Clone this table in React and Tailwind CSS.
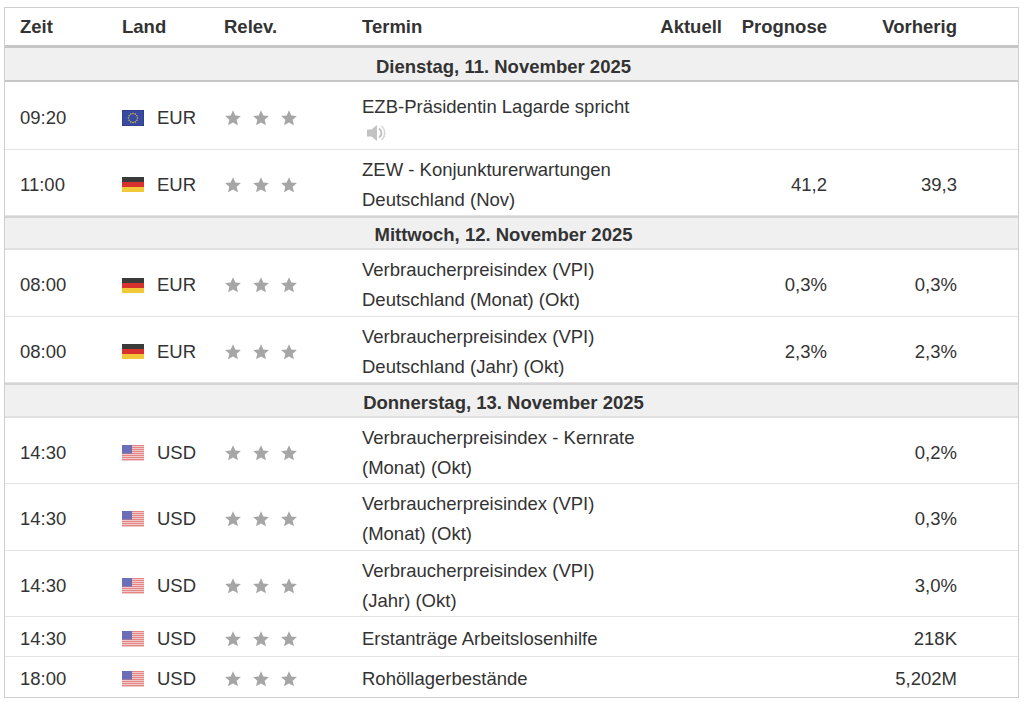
import React from 'react'

const days = [
  {
    label: 'Dienstag, 11. November 2025',
    h: 'h-[34px] pt-[5px] border-b-[2px] border-[#c6c6c6]',
    rows: [
      { h: 'h-[68px]', time: '09:20', flag: 'eu', cur: 'EUR', title: ['EZB-Präsidentin Lagarde spricht'], speech: true },
      { h: 'h-[66px]', time: '11:00', flag: 'de', cur: 'EUR', title: ['ZEW - Konjunkturerwartungen', 'Deutschland (Nov)'], prog: '41,2', prev: '39,3' },
    ],
  },
  {
    label: 'Mittwoch, 12. November 2025',
    h: 'h-[34px] pt-[4px] border-t-[2px] border-b-[2px] border-t-[#d4d4d4] border-b-[#e0e0e0]',
    rows: [
      { h: 'h-[67px]', time: '08:00', flag: 'de', cur: 'EUR', title: ['Verbraucherpreisindex (VPI)', 'Deutschland (Monat) (Okt)'], prog: '0,3%', prev: '0,3%' },
      { h: 'h-[66px]', time: '08:00', flag: 'de', cur: 'EUR', title: ['Verbraucherpreisindex (VPI)', 'Deutschland (Jahr) (Okt)'], prog: '2,3%', prev: '2,3%' },
    ],
  },
  {
    label: 'Donnerstag, 13. November 2025',
    h: 'h-[35px] pt-[4px] border-t-[2px] border-b-[2px] border-t-[#d4d4d4] border-b-[#e0e0e0]',
    rows: [
      { h: 'h-[66px]', time: '14:30', flag: 'us', cur: 'USD', title: ['Verbraucherpreisindex - Kernrate', '(Monat) (Okt)'], prev: '0,2%' },
      { h: 'h-[67px]', time: '14:30', flag: 'us', cur: 'USD', title: ['Verbraucherpreisindex (VPI)', '(Monat) (Okt)'], prev: '0,3%' },
      { h: 'h-[66px]', time: '14:30', flag: 'us', cur: 'USD', title: ['Verbraucherpreisindex (VPI)', '(Jahr) (Okt)'], prev: '3,0%' },
      { h: 'h-[40px]', time: '14:30', flag: 'us', cur: 'USD', title: ['Erstanträge Arbeitslosenhilfe'], prev: '218K' },
      { h: 'h-[40px]', time: '18:00', flag: 'us', cur: 'USD', title: ['Rohöllagerbestände'], prev: '5,202M' },
    ],
  },
]

function Flag({ kind }) {
  if (kind === 'eu') {
    const stars = Array.from({ length: 12 }).map((_, i) => {
      const a = (i / 12) * Math.PI * 2
      return <circle key={i} cx={11 + Math.cos(a) * 4.5} cy={8 + Math.sin(a) * 4.5} r="0.8" fill="#c9b84a" />
    })
    return (
      <svg width="22" height="16" viewBox="0 0 22 16" className="shrink-0">
        <rect width="22" height="16" fill="#3a4aa0" />
        <rect width="22" height="16" fill="none" stroke="#2a3580" strokeWidth="1" />
        {stars}
      </svg>
    )
  }
  if (kind === 'de') {
    return (
      <svg width="22" height="15" viewBox="0 0 22 15" className="shrink-0">
        <rect width="22" height="5" fill="#3a3a3a" />
        <rect y="5" width="22" height="5" fill="#d8322e" />
        <rect y="10" width="22" height="5" fill="#f2c838" />
      </svg>
    )
  }
  return (
    <svg width="22" height="16" viewBox="0 0 22 16" className="shrink-0">
      <rect width="22" height="16" fill="#f4f4f4" />
      {[0, 2, 4, 6, 8, 10, 12, 14].map((y) => (
        <rect key={y} y={y + 0.2} width="22" height="1.1" fill="#e46a6a" />
      ))}
      <rect width="10" height="8.6" fill="#6a6fb8" />
    </svg>
  )
}

function Stars() {
  return (
    <div className="flex items-center gap-[10px]">
      {[0, 1, 2].map((i) => (
        <svg key={i} width="18" height="18" viewBox="0 0 24 24">
          <path d="M12 1.8l3.1 6.9 7.4.7-5.6 5 1.7 7.4L12 17.9l-6.6 3.9 1.7-7.4-5.6-5 7.4-.7z" fill="#a6a6a6" />
        </svg>
      ))}
    </div>
  )
}

function Speaker() {
  return (
    <svg width="22" height="20" viewBox="0 0 22 20" className="mt-[1px] ml-[3px]">
      <path d="M2 6.5h4.5L12 2v16l-5.5-4.5H2z" fill="#c2c2c2" />
      <path d="M14.5 6a5 5 0 0 1 0 8" stroke="#c2c2c2" strokeWidth="2" fill="none" strokeLinecap="round" />
      <path d="M17 3.5a9 9 0 0 1 0 13" stroke="#d6d6d6" strokeWidth="1.6" fill="none" strokeLinecap="round" />
    </svg>
  )
}

function Row({ r, last }) {
  return (
    <div className={`flex items-center pt-[4px] ${r.h} ${last ? '' : 'border-b border-[#e3e3e3]'}`}>
      <div className="w-[115px] pl-[15px]">{r.time}</div>
      <div className="w-[102px] pl-[2px] flex items-center gap-[13px]">
        <Flag kind={r.flag} />
        <span>{r.cur}</span>
      </div>
      <div className="w-[138px] pl-[2px]">
        <Stars />
      </div>
      <div className="w-[279px] pl-[2px] leading-[30px]">
        {r.title.map((t) => (
          <div key={t} className="whitespace-nowrap">{t}</div>
        ))}
        {r.speech && <Speaker />}
      </div>
      <div className="w-[83px] text-right">{r.act || ''}</div>
      <div className="w-[105px] text-right">{r.prog || ''}</div>
      <div className="w-[130px] text-right">{r.prev || ''}</div>
    </div>
  )
}

export default function App() {
  return (
    <div className="w-[1024px] h-[702px] bg-white pt-[7px] pl-[4px]" style={{ fontFamily: '"Liberation Sans", Arial, sans-serif' }}>
      <div className="w-[1015px] border border-[#cfcfcf] text-[18.5px] text-[#333]">
        <div className="flex items-center h-[40px] pt-[1px] font-bold border-b-[3px] border-[#c6c6c6]">
          <div className="w-[115px] pl-[15px]">Zeit</div>
          <div className="w-[102px] pl-[2px]">Land</div>
          <div className="w-[138px] pl-[2px]">Relev.</div>
          <div className="w-[279px] pl-[2px]">Termin</div>
          <div className="w-[83px] text-right">Aktuell</div>
          <div className="w-[105px] text-right">Prognose</div>
          <div className="w-[130px] text-right">Vorherig</div>
        </div>
        {days.map((d, di) => (
          <div key={d.label}>
            <div className={`flex items-center justify-center pr-[16px] bg-[#f0f0f0] font-bold ${d.h}`}>
              {d.label}
            </div>
            {d.rows.map((r, i) => (
              <Row key={i} r={r} last={di === days.length - 1 && i === d.rows.length - 1} />
            ))}
          </div>
        ))}
      </div>
    </div>
  )
}
